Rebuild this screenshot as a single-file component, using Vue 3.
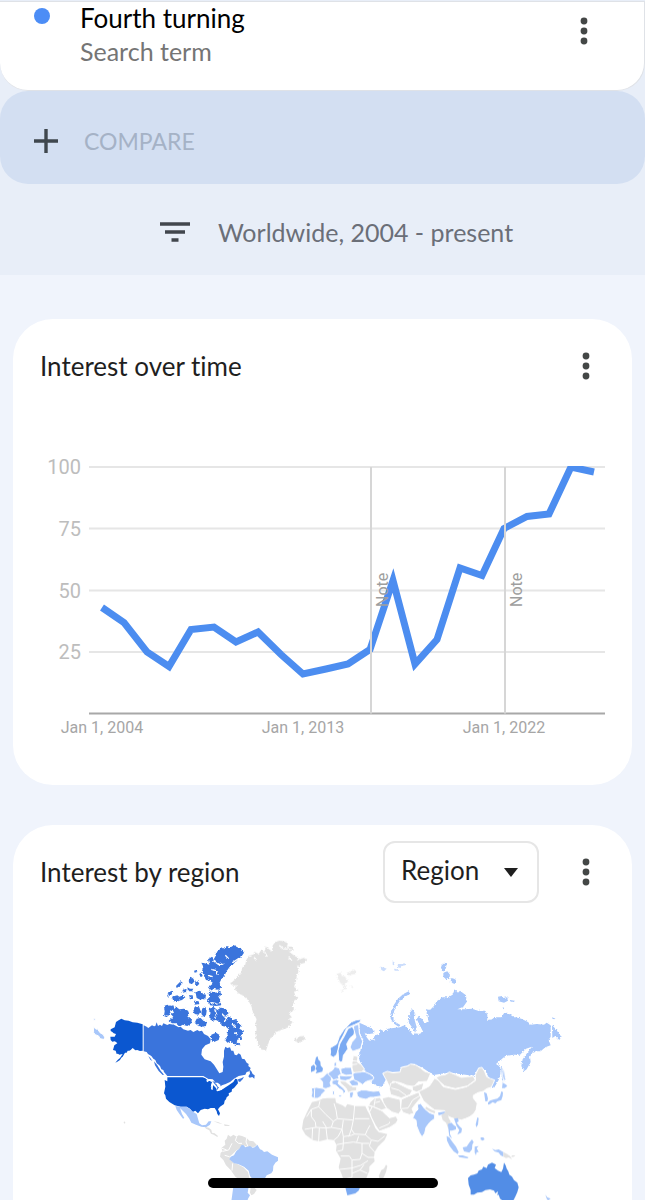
<template>
    <div class="page">
        <header class="top">
            <section class="term">
                <span class="term-dot"></span>
                <div class="term-text">
                    <div class="term-name">Fourth turning</div>
                    <div class="term-type">Search term</div>
                </div>
                <button type="button" class="menu" aria-label="Term options">
                    <svg width="8" height="28" viewBox="0 0 8 28">
                        <circle v-for="y in [4, 14, 24]" :key="y" cx="4" :cy="y" r="3.4" />
                    </svg>
                </button>
            </section>

            <button type="button" class="compare">
                <svg width="24" height="24" viewBox="0 0 24 24">
                    <path d="M12 0V24M0 12H24" stroke="#3f474e" stroke-width="3.4" />
                </svg>
                <span>COMPARE</span>
            </button>

            <button type="button" class="filters">
                <svg width="30" height="20" viewBox="0 0 30 20">
                    <path d="M0 2H30M5 10H25M11.500 18H18.500" stroke="#41464d" stroke-width="3.400" />
                </svg>
                <span>Worldwide, 2004 - present</span>
            </button>
        </header>

        <main class="cards">
            <section class="card">
                <div class="card-head">
                    <h2>Interest over time</h2>
                    <button type="button" class="menu" aria-label="Chart options">
                        <svg width="8" height="28" viewBox="0 0 8 28">
                            <circle v-for="y in [4, 14, 24]" :key="y" cx="4" :cy="y" r="3.4" />
                        </svg>
                    </button>
                </div>
                <svg class="chart" viewBox="0 0 565 360" role="img" aria-label="Interest over time">
                    <defs>
                        <clipPath id="plot">
                            <rect x="49" y="69" width="516" height="260" />
                        </clipPath>
                    </defs>
                    <g v-for="tick in ticks" :key="tick">
                        <line x1="49" x2="565" :y1="yPos(tick)" :y2="yPos(tick)" class="grid" />
                        <text x="41" :y="yPos(tick) + 7" class="y-label">{{ tick }}</text>
                    </g>
                    <line x1="49" x2="565" :y1="yPos(0)" :y2="yPos(0)" class="axis" />
                    <polyline :points="points" class="series" clip-path="url(#plot)" />
                    <g v-for="year in notes" :key="year">
                        <line :x1="xPos(year) + 1" :x2="xPos(year) + 1" :y1="yPos(100)" :y2="yPos(0)" class="note-line" />
                        <text class="note" :transform="`translate(${xPos(year) + 18} 210) rotate(-90)`">Note</text>
                    </g>
                    <text v-for="year in [2004, 2013, 2022]" :key="year" :x="xPos(year)" y="336" class="x-label">Jan 1, {{ year }}</text>
                </svg>
            </section>

            <section class="card card-map">
                <div class="card-head">
                    <h2>Interest by region</h2>
                    <div class="picker">
                        <select v-model="level" aria-label="Region level">
                            <option>Region</option>
                            <option>City</option>
                        </select>
                        <svg width="14" height="9" viewBox="0 0 14 9"><path d="M0 0H14L7 9Z" fill="#1f1f1f" /></svg>
                    </div>
                    <button type="button" class="menu" aria-label="Map options">
                        <svg width="8" height="28" viewBox="0 0 8 28">
                            <circle v-for="y in [4, 14, 24]" :key="y" cx="4" :cy="y" r="3.4" />
                        </svg>
                    </button>
                </div>
                <svg class="map" viewBox="0 0 1695 891" role="img" aria-label="Interest by region">
                    <defs>
                        <filter id="coast" x="-5%" y="-5%" width="110%" height="110%" color-interpolation-filters="sRGB">
                            <feTurbulence type="fractalNoise" baseFrequency="0.22" numOctaves="2" seed="4" />
                            <feDisplacementMap in="SourceGraphic" scale="9" xChannelSelector="R" yChannelSelector="G" />
                        </filter>
                    </defs>
                    <g
                        v-for="area in areas"
                        :key="area.name"
                        :transform="`translate(${area.x} ${area.y})`"
                        :filter="area.rough ? 'url(#coast)' : null"
                    >
                        <path v-for="(shape, i) in area.shapes" :key="i" :class="shape[0]" :d="shape[1]" />
                    </g>
                </svg>
            </section>
        </main>

        <div class="home-bar"></div>
    </div>
</template>

<script setup>
import { ref, computed } from 'vue';

const level = ref('Region');

const ticks = [100, 75, 50, 25];
const notes = [2016, 2022];
const values = [43, 37, 25, 19, 34, 35, 29, 33, 24, 16, 18, 20, 26, 54, 20, 30, 59, 56, 75, 80, 81, 100, 98];

const xPos = (year) => Math.round(62 + (year - 2004) * 22.35);
const yPos = (value) => Math.round((316.5 - value * 2.465) * 2) / 2;

const points = computed(() => values.map((v, i) => `${xPos(2004 + i)},${yPos(v)}`).join(' '));

// Each shape is [shade class, outline]
const areas = [
    {
        name: 'arctic',
        x: 120,
        y: 81,
        rough: true,
        shapes: [
            ['s3', 'M492 68L484 80 470 92 458 104 448 112 440 124 434 136 424 148 418 160 424 172 414 180 400 176 392 180 390 168 400 160 390 152 378 150 372 138 366 124 370 110 364 98 374 100 388 104 384 88 396 80 400 90 408 76 404 68 416 62 424 52 432 58 440 48 452 52 462 46 472 52 482 54Z'],
            ['cut', 'M400 92L416 104 430 102M394 118L408 122 412 134M384 136L398 140M436 76L446 86M478 84L458 98'],
            ['s3', 'M386 190l12-6 10 4 12-6 4 12-8 8 8 12-12 6-16-4-10 2-6-8 8-8z'],
            ['s3', 'M252 228l10-4 10 4 8-2 4 10-12 6-4 12-8 8-8-4 2-14z'],
            ['s3', 'M276 236l14-4 8 6 14-2 12 6 4 10-6 8 14 6-2 14-12 8-14-4-10 6-10-10-12 0-10-8 8-6 6-6-8-8 10-4z'],
            ['s3', 'M386 238L400 230 412 240 424 232 438 238 446 250 436 258 450 262 460 270 470 266 472 280 484 284 478 296 492 304 484 316 486 330 476 324 470 334 482 346 466 344 452 334 442 338 434 328 444 318 440 306 448 300 438 290 426 288 420 276 408 270 396 272 388 260 392 248Z'],
            ['cut', 'M404 238L410 254 404 264M424 250L440 266 432 276M456 282L466 292M462 308L474 312'],
            ['s3', 'M344 230l14 2 4 12-6 10-12-2-4-10zM366 236l10-6 4 12-2 14-10 4-4-10zM350 266l12-2 8 8 10 4-2 12-14 2-12-4-8-8zM394 314l14-6 12 8-4 14-14 6-10-8z'],
            ['s3', 'M262 192l12-10 6 6-8 8-10 4zM276 200l16-4 6 4 12-4 6 6-10 8-14 4-12 0zM288 168l14-14 6 4-8 10-10 6zM308 180l12-4-2 10-10 2zM326 152l6-12 8 6 4 8-8 8-8-2zM344 158l10-4 4 8-8 6zM322 172l8 4 10 0-4 8-12 0zM346 186l14-4 8 8 4 12-10 8-12-6-2-10zM328 196l10 0 2 10-10 2zM342 212l14 2 2 8-14 2zM370 192l8 2-2 14-8 0zM388 218l16 4 18-4 2 8-16 2-18-2zM384 172l8-4 10 8-10 6z'],
            ['s3', 'M358 132l6-4 4 10-6 4zM342 122l8-2 2 6-8 2z'],
        ],
    },
    {
        name: 'north-america',
        x: 120,
        y: 81,
        shapes: [
            ['s1 line', 'M40 290L48 298 52 296 60 308 70 314 75 324 70 328 60 326 56 318 46 314 41 308ZM41 266l4-2 1 6-4 2z'],
            ['s3', 'M191 286L200 290 205 294 216 286 222 289 226 288 230 277 234 288 240 284 246 288 250 280 262 285 268 282 282 284 296 292 302 290 310 298 324 302 332 300 340 306 352 300 358 304 366 302 372 312 384 318 392 328 390 340 376 346 366 358 364 374 374 388 392 394 402 404 412 420 418 430 428 426 430 410 428 396 432 380 432 362 436 350 442 354 450 352 454 362 460 362 464 374 470 376 476 370 482 374 486 386 494 388 500 398 506 402 505 408 512 414 508 424 500 426 496 434 476 438 462 446 450 456 432 464 418 470 410 482 412 472 404 462 396 452 384 446 370 438 262 438 252 426 250 420 244 418 240 408 236 404 230 400 226 390 220 386 214 378 204 372 200 366 191 364Z'],
            ['s3', 'M508 418l6 6 4 8 6 4-1 10-6-5-8 2-4-4 5-8zM474 448l10-3 8-5-4 8-8 8-5-2z'],
            ['s4', 'M188 283V362L180 363 172 360 166 361 158 354 152 360 148 362 143 362 140 368 135 368 128 380 124 383 120 390 112 395 106 398 113 390 120 384 128 372 118 374 114 371 110 372 107 362 99 360 103 346 112 340 108 336 104 334 97 335 92 330 91 320 104 320 108 312 101 310 97 306 92 303 92 298 104 292 108 276 116 271 124 266 134 271 146 272 158 277 172 278Z'],
            ['s4', 'M262 442H368L376 445 382 450 396 456 392 470 400 466 408 474 412 484 430 476 446 466 460 456 466 446 472 448 474 460 462 474 456 478 455 485 446 490 447 496 440 502 438 508 434 512 432 522 420 530 414 538 420 550 417 558 412 552 410 544 404 534 392 534 384 538 374 536 362 540 354 550 346 542 338 546 330 536 320 530 302 530 284 526 268 516 258 506 256 496 252 490 256 470 254 450 262 454Z'],
            ['lake', 'M378 452l10-5 10 1 7 7-10-1-8-2-4 5zM396 458l5 0-2 10-1 12-5-2 1-13zM403 458l10 0 8 6 1 8-8-1-5-9zM409 481l12-5 12-5-8 9-14 4zM424 467l10-4-2 5-8 2z'],
            ['s3', 'M222 394l10 12 10 16 10 12-4 1-12-12-11-17zM205 378l6 6 6 9-6-4z'],
            ['s1', 'M286 528L302 530 320 530 330 538 340 546 350 552 354 566 358 580 366 586 378 584 386 574 394 574 390 584 378 592 364 590 348 584 334 578 328 566 318 552 306 540 300 534 306 552 313 564 309 566 300 554 290 540Z'],
            ['s0', 'M374 590l12 3 8 6 2 9 8 2 10 8-2 3-11-7-8-3-5-10-10-5zM400 574l14 2 14 7-12-3zM432 583l14 2 4 3-16 0zM132 574l4 3-1 4-4-2z'],
            ['s0', 'M444 614L452 620 460 614 470 620 476 616 486 618 500 624 508 632 520 634 530 644 524 650 505 652 490 646 480 656 470 660 458 672 448 680 454 690 460 698 472 702 490 712 504 726 508 744 494 752 480 750 466 740 452 720 438 706 430 690 420 680 422 668 428 664 424 654 436 644 434 632 440 626Z'],
            ['border', 'M470 620L466 632 476 640 486 640M500 624L498 636 504 650M456 640L446 660 428 664M448 680L434 676M458 700L456 722M424 654L440 660'],
            ['s1', 'M470 662L478 656 484 646 490 645 496 652 510 648 518 653 524 652 532 644 540 658 546 660 552 666 562 664 576 674 594 682 594 692 586 698 580 708 579 722 574 730 560 736 554 746 546 756 540 760 520 750 510 738 506 722 492 710 474 702 462 700 448 688 452 680 462 676 466 668Z'],
            ['s1', 'M460 770L466 748 476 746 484 752 500 760 506 770 503 788 510 796 504 806 502 814H454Z'],
            ['s0', 'M512 772l12 2 6 6-8 12-8 4-4-8z'],
        ],
    },
    {
        name: 'greenland',
        x: 540,
        y: 81,
        rough: true,
        shapes: [
            ['s0', 'M30 160L44 150 52 138 64 128 66 114 76 104 78 92 86 78 100 74 104 66 116 72 124 60 132 66 138 54 134 48 148 58 156 64 158 46 166 36 178 32 192 34 204 40 200 50 214 50 222 58 208 66 224 78 236 84 230 92 250 84 262 88 256 98 242 102 238 110 230 106 236 124 230 138 228 154 222 170 236 182 222 184 226 198 236 204 222 212 218 230 224 240 206 250 216 262 206 266 218 276 204 292 184 300 168 306 158 320 150 326 144 344 138 362 124 358 116 346 110 330 106 312 110 296 106 280 110 268 98 244 94 228 84 210 68 196 52 188 44 176 52 166 38 166Z'],
            ['cut', 'M178 46L190 56 212 58M102 82L110 92M134 66L142 80M206 82L216 92'],
            ['s0', 'M224 322l8 4 4-6 16-2 4 8-10 8-12 4-10-6z'],
            ['s0 faint', 'M350 132l12-4 4 10 8 0 6 10 6 6-8 2-4 10 6 10-6 2-6-12-8-8-4-10zM380 128l10-2 12-8 6 6-2 8-10 2-8 4zM362 178l8 2-4 6zM392 166l8 4-4 4z'],
        ],
    },
    {
        name: 'russia',
        x: 840,
        y: 111,
        rough: true,
        shapes: [
            ['s1', 'M118 248L132 254 148 262 164 272 162 280 148 282 134 280 140 292 148 302 158 298 166 302 160 292 170 284 180 282 180 268 192 274 204 266 220 264 240 262 252 256 268 270 278 284 286 278 276 262 266 248 268 220 278 208 286 222 284 240 290 262 284 280 300 282 308 272 298 254 290 236 298 228 306 238 314 248 326 246 322 226 318 208 330 210 342 198 350 184 368 172 384 172 398 164 404 148 414 158 420 152 438 166 440 186 430 200 412 208 436 208 456 206 474 212 496 212 502 224 502 240 516 238 524 232 544 232 552 220 562 218 580 230 604 236 624 246 632 254 650 252 672 254 680 248 692 256 692 290 686 300 692 316 676 322 662 334 640 334 630 350 632 366 620 388 612 394 604 378 608 358 622 338 636 320 618 326 600 344 580 344 556 348 528 372 546 384 542 400 536 420 522 444 512 440 510 420 495 390 472 388 465 408 390 398 360 402 340 405 305 382 280 373 245 382 240 396 210 396 190 400 198 418 186 440 172 438 155 428 158 405 138 398 128 380 118 360 118 340 128 316 130 300 120 280Z'],
            ['s1', 'M696 256L708 268 716 280 724 290 718 300 706 288 697 294ZM697 232l8 2-2 4-6-2zM548 202l6 2-4 4z'],
            ['s1', 'M210 232L214 214 222 194 234 176 250 162 266 154 270 162 254 170 240 182 228 200 220 218 218 230 226 246 242 256 236 260 220 250Z'],
            ['s1', 'M364 74l8-6 8 2-2 14-6 10-8-4zM370 98l12-4 8 10-2 12-10 2-8-8zM394 114l8 2 6 4-2 12-8-2-6-6zM534 170l12-2 4 6 12-2 2 10-12 6-16-4zM570 180l14 2-2 4-12-2z'],
            ['s1 faint', 'M182 80l8 2 10 4-8 8-8-4zM218 64l6 4-2 8-4-2zM234 72l10 0 10-2 2 6-12 2-2 6-10-2zM222 86l14 2 2 4-14 0z'],
            ['s1 line', 'M542 378l6 4 4 20 4 22-8 6-4-20z'],
        ],
    },
    {
        name: 'nordics',
        x: 840,
        y: 111,
        shapes: [
            ['s2 line', 'M30 346L32 334 30 324 50 312 58 290 72 268 88 252 94 246 108 240 124 238 120 246 104 254 94 258 80 264 70 286 58 308 54 330 50 344 40 352Z'],
            ['s2 line', 'M56 362L54 332 60 310 72 290 84 266 96 260 104 270 102 284 90 294 80 312 84 326 76 338 70 346 68 364 62 366Z'],
            ['s1 line', 'M100 258L116 252 118 280 128 304 122 326 98 334 90 322 96 306 108 292 102 270Z'],
        ],
    },
    {
        name: 'europe-africa',
        x: 750,
        y: 411,
        shapes: [
            ['s2', 'M78 52l5-3 2 10 6 6 1 12 7 8-2 10-20 5 4-9-5-3 4-10-6-8zM63 80l8-6 5 6-2 12-11 4z'],
            ['s1 line', 'M64 144L80 142 102 146 106 152 96 162 92 170 82 175 72 175 63 170 66 158Z'],
            ['border', 'M74 146L73 174'],
            ['s1 line', 'M88 114L98 112 104 106 112 98 124 108 124 120 120 128 124 140 108 146 98 144 98 126Z'],
            ['s1 line', 'M118 96L128 90 134 80 148 84 154 102 144 108 148 116 130 120 122 110 114 102Z'],
            ['s1 line', 'M152 86L166 82 184 82 188 104 168 106 154 100ZM132 68l8-2 0 12-8 2z'],
            ['s1 line', 'M148 106L168 108 190 106 180 118 166 122 150 120ZM126 122L140 118 148 122 144 130 160 144 168 154 160 162 158 152 148 146 138 136 126 132ZM144 164l12 2-2 6-8-3zM128 152l6 1-1 12-5-1z'],
            ['s0 line', 'M148 122L166 124 176 132 188 140 200 140 200 152 184 154 174 158 168 144 154 132Z'],
            ['s1 line', 'M176 124L190 118 204 124 206 136 186 138Z'],
            ['s1 line', 'M178 158l12-4 0 8-2 10-8 3zM188 102L196 96 214 94 226 96 240 102 252 112 248 120 236 122 226 126 218 134 206 126 192 120Z'],
            ['s0 line', 'M190 46L204 50 202 66 214 74 224 88 214 96 190 98 186 84 186 68Z'],
            ['border', 'M186 62L204 64M186 74L202 72'],
            ['s1 line', 'M200 156L214 150 228 150 250 154 268 152 274 168 250 172 240 172 228 178 210 174 202 168Z'],
            ['s0', 'M66 186L86 182 98 176 112 174 136 174 138 188 158 196 166 202 172 192 196 198 226 198 232 212 238 222 246 240 256 264 266 276 292 282 284 300 264 320 254 336 252 352 254 364 238 380 238 392 230 412 222 430H164L154 400 146 382 152 356 138 332 140 316 132 300 112 298 88 304 68 300 46 284 36 266 40 240 52 214Z'],
            ['border', 'M90 182L86 200 64 208 50 230M86 200L108 224 130 244 142 236 138 210 132 190M64 208L64 230 76 246 78 262M142 236L190 240 194 196M194 236H238M190 240L184 268 194 282M130 244L124 262 108 264 78 262 44 268M108 264L112 298M88 264L86 304M68 262L66 300M98 244L110 264M124 262L156 268 144 290 132 300M156 268L160 240M156 268L160 290 184 286 194 282 226 284 232 270 240 256M226 284L244 300 264 304 284 288M244 300L238 318 254 336M160 290L160 310 140 314M160 310L190 306 216 310 238 310M216 310L216 340 234 352 252 352M216 340L210 358 186 360 178 348 152 348M186 360V384L150 388M186 384L212 376 234 362M186 384L186 412 164 418M186 400L210 390 232 400M210 390L222 374M206 288L200 306M160 310L158 330 142 334M184 268L176 290'],
            ['s2', 'M164 432L180 426 194 420 214 424 212 438 206 452 196 460 172 466 168 450Z'],
            ['s0', 'M274 390l8-4 6-12 4 4-4 18-8 18-10 4-4-10z'],
            ['s0 line', 'M232 196L250 200 276 212 290 226 300 234 318 230 324 240 318 250 300 262 268 274 256 256 244 232Z'],
            ['border', 'M268 264L296 252 306 236M246 200L240 214'],
            ['s0 line', 'M240 186L254 174 270 172 282 190 290 206 274 210 250 200 236 196Z'],
            ['border', 'M256 176L252 198M256 188L270 184'],
            ['s0 line', 'M276 174L296 170 312 174 330 178 334 210 326 222 306 216 290 204 280 188Z'],
            ['s0 line', 'M278 100L292 94 308 98 330 96 334 82 352 78 362 72 376 74 392 84 404 94 422 100 412 124 384 126 372 140 350 136 330 128 308 124 310 144 298 140 290 122Z'],
            ['s0 line', 'M302 130L316 126 340 138 356 146 368 150 360 164 334 174 316 168 302 164 298 146Z'],
            ['border', 'M304 144L326 150 348 166'],
            ['s0 line', 'M366 140L390 132 402 128 396 150 380 156 368 152Z'],
            ['s0 line', 'M334 178L356 168 386 156 392 174 380 188 366 206 372 220 358 224 340 218 332 206Z'],
            ['border', 'M334 206L354 204 368 180 388 168'],
        ],
    },
    {
        name: 'asia-pacific',
        x: 1050,
        y: 441,
        shapes: [
            ['s0 line', 'M86 124L104 116 118 108 134 84 146 92 160 110 196 118 230 110 256 92 256 74 266 54 276 52 284 64 290 80 302 86 314 90 304 112 290 116 280 124 264 128 250 136 250 144 262 160 258 180 252 190 240 200 226 206 214 210 192 206 176 200 164 182 134 180 118 168 100 152 92 136Z'],
            ['s0 line', 'M138 82L152 76 166 74 178 66 196 74 214 82 232 80 250 78 256 90 232 108 196 116 164 108 148 94Z'],
            ['s1 line', 'M82 164L92 160 104 176 118 188 134 194 134 206 120 216 108 232 104 250 96 261 88 248 80 228 78 210 68 204 76 186 84 178Z'],
            ['s0', 'M108 170l14 8 14 6-2 6-16-6-12-8zM154 196l12-12 8 6 2 14 6 10-4 10 2 18-6-8-6-16-10-8z'],
            ['s1', 'M144 188l10-2 12-2-4 6-8 4-8 2zM174 222l10-4 8 8 6 4 0 8-12 4-6 0 0 10 6 14-8-8-2-14zM192 206l12-2 2 10-6 4 8 10 8 8-2 12-12 6 6-14-8-12z'],
            ['s1', 'M282 126l8 4 4 16-2 8-6 0zM294 158l6-6 12-4 10-2 8-8 4-14 5 2-1 12-4 12-12 4-6 6-8-4-8 6-6 2zM338 98l10 6 4 4-8 6-8 0z'],
            ['s1 line', 'M340 54l4 10 2 22-4 12-4-20z'],
            ['s1', 'M262 202l4 2-2 20-5 8-2-8zM272 262l8 0 4 6-6 4-6-3zM170 258l8 4 8 12 12 16 8 16-3 6-12-8-12-16-8-16zM204 316l14 0 18 6-4 3-24-4zM218 292l12-2 8-12 8-10 5 8-4 8-1 14-8 10-16-4zM254 290l12-2-6 6 6 12-6 0-2 10-4-8z'],
            ['s1', 'M306 296l10 4 10-2 14 8 0 14-8-4-6-8-12-4z'],
            ['s0', 'M340 306l12 6 8 6 6 10-10-6-8 2-8-4zM366 316l10 0-4 4-8 1zM0 204l18-4 2 8-8 12-12 4z'],
            ['s2b', 'M234 384L242 376 252 374 262 370 266 362 276 358 280 350 290 354 294 344 306 338 318 344 314 354 324 362 334 366 339 356 342 338 347 346 350 356 355 364 358 374 366 380 372 390 382 398 386 412 382 426 376 440 370 452 340 454 330 446 326 434 322 436 324 424 316 430 312 422 300 418 286 420 276 426 262 428 252 434 242 434 242 420 236 404Z'],
            ['s1', 'M466 434l6 8 10 4-8 6-4-6z'],
        ],
    },
];
</script>

<style>
html,
body {
    margin: 0;
    background: #f0f4fc;
}
</style>

<style scoped>
.page {
    min-height: 100vh;
    font-family: Lato, "Open Sans", sans-serif;
    font-size: 26px;
    font-variant-ligatures: none;
    color: #1f1f1f;
    background: #f0f4fc;
}
button {
    border: 0;
    padding: 0;
    background: none;
    font: inherit;
    color: inherit;
    cursor: pointer;
}
svg {
    display: block;
}
.top {
    padding-top: 1px;
    background: #e8eef8;
}
.term {
    box-sizing: border-box;
    height: 90px;
    display: flex;
    align-items: flex-start;
    padding: 0 41px 0 34px;
    background: #fff;
    border: 1px solid #dfe2e7;
    border-left: 0;
    border-radius: 0 0 28px 28px;
}
.term-dot {
    width: 16px;
    height: 16px;
    margin-top: 6px;
    border-radius: 50%;
    background: #4c8df6;
}
.term-text {
    flex: 1;
    margin-left: 30px;
    line-height: 33px;
}
.term-name {
    color: #000;
}
.term-type {
    font-size: 25px;
    color: #757575;
}
.menu {
    width: 38px;
    height: 58px;
    display: flex;
    align-items: center;
    justify-content: center;
    fill: #444746;
}
.compare {
    width: 100%;
    height: 93px;
    display: flex;
    align-items: center;
    gap: 26px;
    padding: 6px 34px 0;
    border-radius: 28px;
    background: #d3dff2;
    font-size: 23px;
    color: #a5b2c6;
}
.filters {
    width: 100%;
    height: 91px;
    display: flex;
    align-items: center;
    justify-content: center;
    gap: 28px;
    padding: 4px 0 0 28px;
    font-size: 25px;
    color: #6b6f78;
}
.cards {
    display: flex;
    flex-direction: column;
    gap: 40px;
    padding: 44px 13px 0;
}
.card {
    padding: 16px 27px 28px;
    border-radius: 40px;
    background: #fff;
}
.card-map {
    padding-bottom: 0;
    border-radius: 40px 40px 0 0;
}
.card-head {
    height: 62px;
    display: flex;
    align-items: center;
}
.card-head h2 {
    flex: 1;
    margin: 0;
    font-size: 26px;
    font-weight: 400;
}
.picker {
    display: grid;
    align-items: center;
    margin-right: 28px;
}
.picker select,
.picker svg {
    grid-area: 1 / 1;
}
.picker select {
    appearance: none;
    width: 156px;
    height: 62px;
    padding: 0 16px 4px;
    border: 2px solid #e6e6e6;
    border-radius: 12px;
    background: #fff;
    font: inherit;
    color: inherit;
}
.picker svg {
    justify-self: end;
    margin-right: 21px;
    pointer-events: none;
}
.chart,
.map {
    width: 100%;
    height: auto;
}
.chart text {
    font-family: Roboto, sans-serif;
}
.grid {
    stroke: #e6e6e6;
    stroke-width: 2;
}
.axis {
    stroke: #a8a8a8;
    stroke-width: 2;
}
.series {
    fill: none;
    stroke: #4c8df0;
    stroke-width: 7;
    stroke-miterlimit: 10;
}
.note-line {
    stroke: #d6d6d6;
    stroke-width: 2;
}
.y-label {
    font-size: 20px;
    text-anchor: end;
    fill: #bdbdbd;
}
.x-label {
    font-size: 16px;
    text-anchor: middle;
    fill: #a6a6a6;
}
.note {
    font-size: 16px;
    fill: #9e9e9e;
}
.s0 {
    fill: #e1e1e1;
}
.s1 {
    fill: #a8c7fa;
}
.s2 {
    fill: #7baaf2;
}
.s2b {
    fill: #528de6;
}
.s3 {
    fill: #3a74dc;
}
.s4 {
    fill: #0b57d0;
}
.faint {
    opacity: 0.6;
}
.lake {
    fill: #fff;
}
.line {
    stroke: #fff;
    stroke-width: 3;
}
.cut {
    fill: none;
    stroke: #fff;
    stroke-width: 4;
}
.border {
    fill: none;
    stroke: #fff;
    stroke-width: 3;
}
.home-bar {
    position: fixed;
    bottom: 12px;
    left: 50%;
    width: 230px;
    height: 10px;
    margin-left: -115px;
    border-radius: 5px;
    background: #000;
}
</style>
